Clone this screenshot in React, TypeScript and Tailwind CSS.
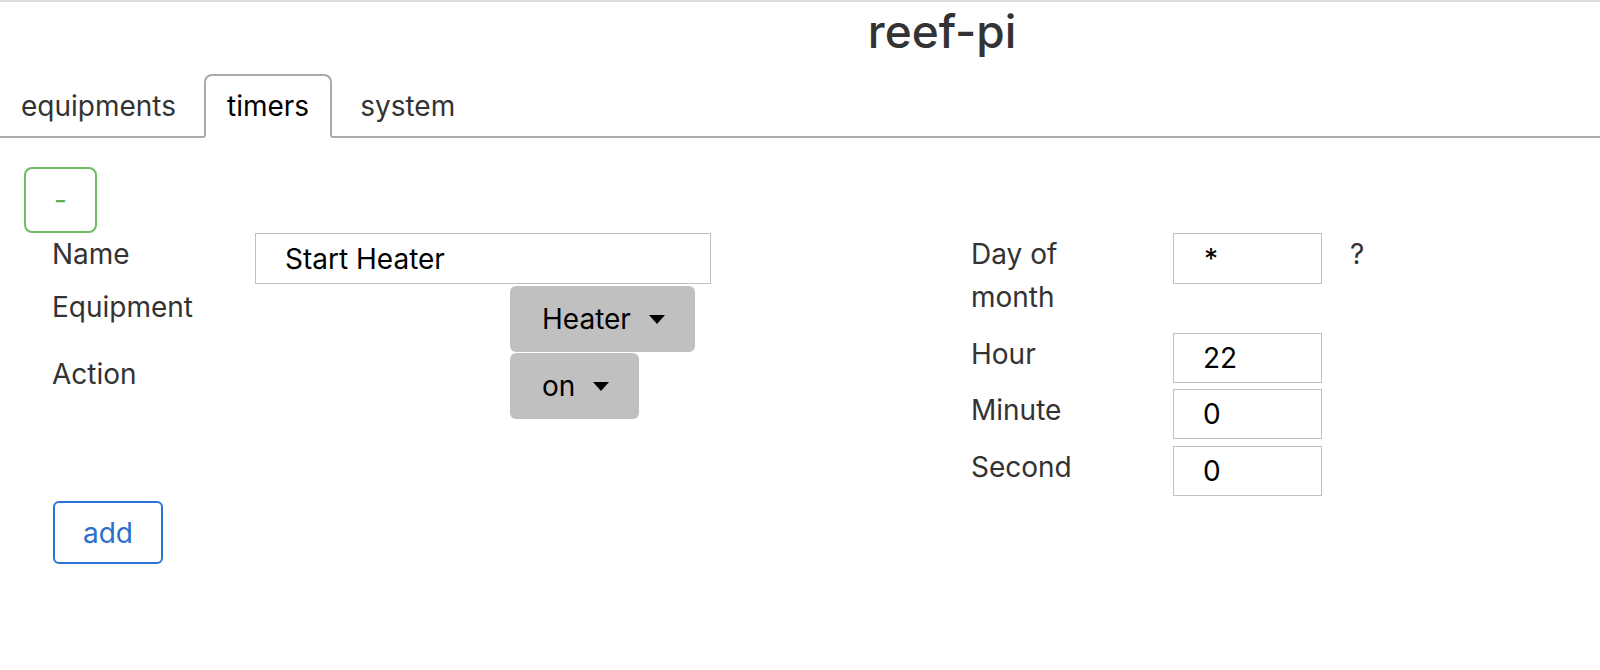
import React, { useState } from 'react';

const tabs = ['equipments', 'timers', 'system'];

const Caret: React.FC = () => (
  <svg width="16" height="9" viewBox="0 0 16 9" className="shrink-0">
    <polygon points="0,0 16,0 8,9" fill="#000" />
  </svg>
);

const Dropdown: React.FC<{ label: string }> = ({ label }) => (
  <button className="flex h-[66px] items-center gap-[18px] rounded-md bg-[#c0c0c0] pl-[32px] pr-[30px] text-black">
    <span>{label}</span>
    <Caret />
  </button>
);

const TimeField: React.FC<{ label: string; value: string; className?: string }> = ({ label, value, className }) => (
  <div className={`flex ${className ?? ''}`}>
    <div className="w-[202px] leading-[42px]">{label}</div>
    <input
      readOnly
      value={value}
      className="h-[50px] w-[149px] border border-[#c0c0c0] pl-[29px] text-black outline-none"
    />
  </div>
);

export default function App() {
  const [active, setActive] = useState('timers');

  return (
    <div className="min-h-[670px] border-t-2 border-[#dcdcdc] bg-white font-[Inter,sans-serif] text-[28px] text-[#333]">
      <div className="flex justify-center pl-[284px] pt-px">
        <h1 className="text-[46px] font-medium leading-[56px] text-[#333]">reef-pi</h1>
      </div>

      {/* tabs */}
      <div className="mt-[15px] flex gap-[5px] border-b-2 border-[#aaa]">
        {tabs.map((t) => (
          <button
            key={t}
            onClick={() => setActive(t)}
            className={`-mb-[2px] rounded-t-lg border-2 px-[21px] py-[9px] leading-[42px] first:pl-[19px] ${
              active === t ? 'border-[#aaa] border-b-white text-black' : 'border-transparent text-[#333]'
            }`}
          >
            {t}
          </button>
        ))}
      </div>

      <div className="pl-[24px] pt-[29px]">
        <button className="flex h-[66px] w-[73px] items-center justify-center rounded-lg border-2 border-[#72b968] text-[#5fae55]">
          -
        </button>

        <div className="flex">
          {/* left form */}
          <div className="w-[947px] pl-[28px]">
            <div className="flex">
              <div className="w-[203px] leading-[42px]">Name</div>
              <input
                readOnly
                value="Start Heater"
                className="h-[51px] w-[456px] border border-[#c0c0c0] pl-[29px] text-black outline-none"
              />
            </div>
            <div className="mt-[2px] flex">
              <div className="w-[203px] leading-[42px]">Equipment</div>
              <div className="ml-[255px]">
                <Dropdown label="Heater" />
              </div>
            </div>
            <div className="mt-px flex">
              <div className="w-[203px] leading-[42px]">Action</div>
              <div className="ml-[255px]">
                <Dropdown label="on" />
              </div>
            </div>
            <button className="ml-px mt-[82px] h-[63px] w-[110px] rounded-md border-2 border-[#2b74d3] text-[#2b6fcc]">
              add
            </button>
          </div>

          {/* right form */}
          <div>
            <div className="flex">
              <div className="w-[202px] leading-[43px]">
                Day of
                <br />
                month
              </div>
              <input
                readOnly
                value="*"
                className="h-[51px] w-[149px] border border-[#c0c0c0] pl-[30px] text-black outline-none"
              />
              <span className="ml-[28px] leading-[42px]">?</span>
            </div>
            <TimeField label="Hour" value="22" className="mt-[14px]" />
            <TimeField label="Minute" value="0" className="mt-[6px]" />
            <TimeField label="Second" value="0" className="mt-[7px]" />
          </div>
        </div>
      </div>
    </div>
  );
}
